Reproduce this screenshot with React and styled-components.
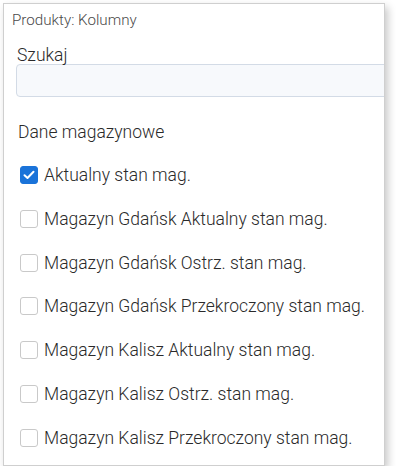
import React, { useState } from 'react';
import styled, { createGlobalStyle } from 'styled-components';

const GlobalStyle = createGlobalStyle`
  body {
    margin: 0;
    background: #fff;
    font-family: Roboto, "Liberation Sans", sans-serif;
    color: #333;
  }
`;

const Panel = styled.div`
  margin: 3px 0 0 3px;
  width: 382px;
  height: 463px;
  box-sizing: border-box;
  border: 1px solid #cfcfcf;
  box-shadow: 3px 4px 8px rgba(0, 0, 0, 0.22);
  overflow: hidden;
  background: #fff;
  padding: 8px 0 0 8px;
`;

const Caption = styled.div`
  font-size: 15.2px;
  font-weight: 300;
  color: #4a4a4a;
  line-height: 16px;
`;

const SearchLabel = styled.label`
  display: block;
  margin: 18px 0 0 5px;
  font-size: 17.5px;
  font-weight: 300;
  line-height: 18px;
  color: #2a2a2a;
`;

const SearchInput = styled.input`
  display: block;
  box-sizing: border-box;
  margin: 0 0 0 4px;
  width: 420px;
  height: 33px;
  border: 1px solid #d3dbe6;
  border-radius: 4px;
  background: #f7f9fc;
  outline: none;
`;

const Section = styled.div`
  margin: 25px 0 0 6px;
  font-size: 17.5px;
  font-weight: 300;
  line-height: 20px;
  color: #2a2a2a;
`;

const List = styled.div`
  display: flex;
  flex-direction: column;
  margin-top: 24px;
  padding-left: 8px;
  gap: 25.8px;
`;

const Row = styled.label`
  display: flex;
  align-items: center;
  gap: 6px;
  font-size: 17.5px;
  font-weight: 300;
  line-height: 18px;
  color: #2a2a2a;
  cursor: pointer;
`;

const Box = styled.span`
  width: 18px;
  height: 18px;
  box-sizing: border-box;
  border-radius: 3px;
  border: 1px solid ${p => (p.$checked ? '#1a73d9' : '#c9c9c9')};
  background: ${p => (p.$checked ? '#1a73d9' : '#fff')};
  display: flex;
  align-items: center;
  justify-content: center;
  flex-shrink: 0;
`;

const items = [
  'Aktualny stan mag.',
  'Magazyn Gdańsk Aktualny stan mag.',
  'Magazyn Gdańsk Ostrz. stan mag.',
  'Magazyn Gdańsk Przekroczony stan mag.',
  'Magazyn Kalisz Aktualny stan mag.',
  'Magazyn Kalisz Ostrz. stan mag.',
  'Magazyn Kalisz Przekroczony stan mag.',
];

const App = () => {
  const [checked, setChecked] = useState([true, false, false, false, false, false, false]);

  const toggle = (i) => {
    setChecked(c => c.map((v, j) => (j === i ? !v : v)));
  };

  return (
    <>
      <GlobalStyle />
      <Panel>
        <Caption>Produkty: Kolumny</Caption>
        <SearchLabel>Szukaj</SearchLabel>
        <SearchInput type="text" />
        <Section>Dane magazynowe</Section>
        <List>
          {items.map((label, i) => (
            <Row key={label} onClick={() => toggle(i)}>
              <Box $checked={checked[i]}>
                {checked[i] && (
                  <svg width="12" height="10" viewBox="0 0 12 10">
                    <path d="M1.5 5.2 L4.5 8 L10.5 1.8" fill="none" stroke="#fff" strokeWidth="2" strokeLinecap="round" strokeLinejoin="round" />
                  </svg>
                )}
              </Box>
              {label}
            </Row>
          ))}
        </List>
      </Panel>
    </>
  );
};

export default App;
